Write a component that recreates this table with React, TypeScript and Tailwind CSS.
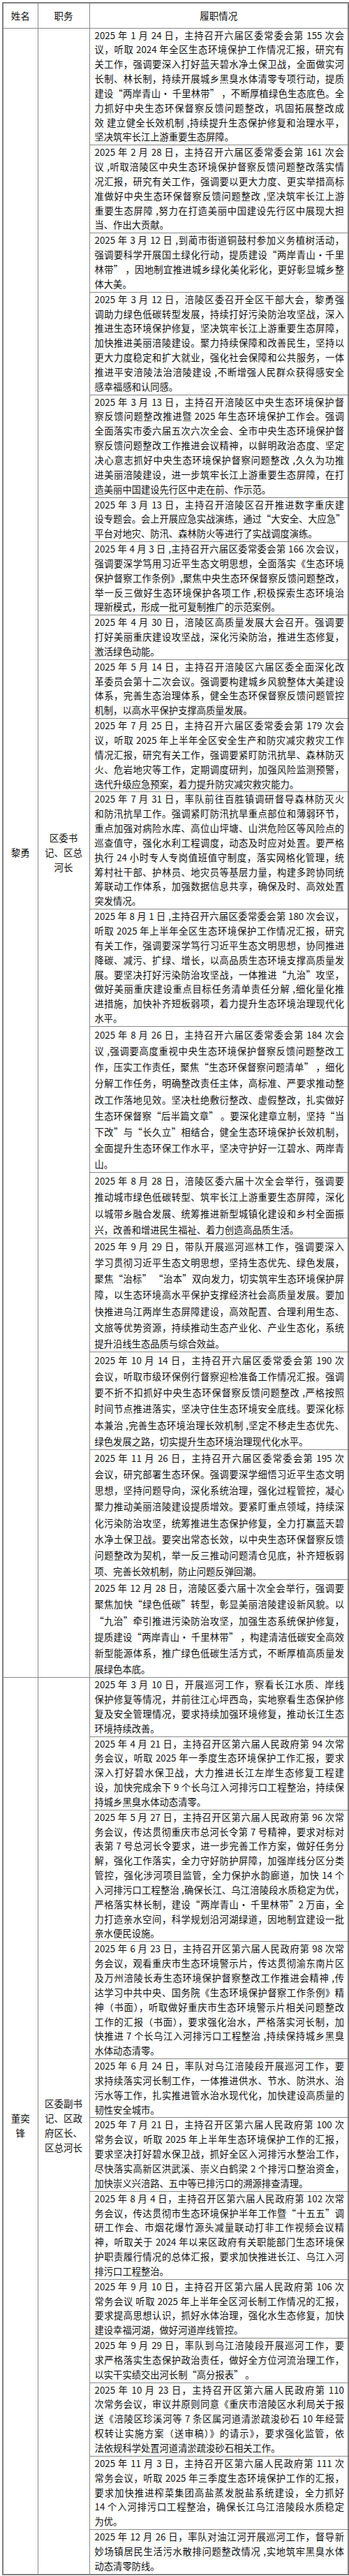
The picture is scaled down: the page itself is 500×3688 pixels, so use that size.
type Entry = { lines: string[]; tall?: boolean };

const LEAD: Entry[] = [
  {
    lines: [
      "2025 年 1 月 24 日，主持召开六届区委常委会第 155 次会",
      "议，听取 2024 年全区生态环境保护工作情况汇报，研究有",
      "关工作，强调要深入打好蓝天碧水净土保卫战，全面做实河",
      "长制、林长制，持续开展城乡黑臭水体清零专项行动，提质",
      "建设“两岸青山· 千里林带” ，不断厚植绿色生态底色。全",
      "力抓好中央生态环保督察反馈问题整改，巩固拓展整改成",
      "效 建立健全长效机制 ,持续提升生态保护修复和治理水平，",
      "坚决筑牢长江上游重要生态屏障。",
    ],
  },
  {
    lines: [
      "2025 年 2 月 28 日，主持召开六届区委常委会第 161 次会",
      "议 ,听取涪陵区中央生态环境保护督察反馈问题整改落实情",
      "况汇报，研究有关工作，强调要以更大力度、更实举措高标",
      "准做好中央生态环保督察反馈问题整改 ,坚决筑牢长江上游",
      "重要生态屏障 ,努力在打造美丽中国建设先行区中展现大担",
      "当、作出大贡献。",
    ],
  },
  {
    lines: [
      "2025 年 3 月 12 日 ,到蔺市街道铜鼓村参加义务植树活动，",
      "强调要科学开展国土绿化行动，提质建设“两岸青山•千里",
      "林带” ，因地制宜推进城乡绿化美化彩化，更好彰显城乡整",
      "体大美。",
    ],
  },
  {
    lines: [
      "2025 年 3 月 12 日，涪陵区委召开全区干部大会，黎勇强",
      "调助力绿色低碳转型发展，持续打好污染防治攻坚战，深入",
      "推进生态环境保护修复，坚决筑牢长江上游重要生态屏障，",
      "加快推进美丽涪陵建设。聚力持续保障和改善民生，坚持以",
      "更大力度稳定和扩大就业，强化社会保障和公共服务，一体",
      "推进平安涪陵法治涪陵建设 ,不断增强人民群众获得感安全",
      "感幸福感和认同感。",
    ],
  },
  {
    lines: [
      "2025 年 3 月 13 日，主持召开涪陵区中央生态环境保护督",
      "察反馈问题整改推进暨 2025 年生态环境保护工作会。强调",
      "全面落实市委六届五次六次全会、全市中央生态环境保护督",
      "察反馈问题整改工作推进会议精神，以鲜明政治态度、坚定",
      "决心意志抓好中央生态环境保护督察问题整改 ,久久为功推",
      "进美丽涪陵建设，进一步筑牢长江上游重要生态屏障，在打",
      "造美丽中国建设先行区中走在前、作示范。",
    ],
  },
  {
    lines: [
      "2025 年 3 月 13 日，主持召开涪陵区召开推进数字重庆建",
      "设专题会。会上开展应急实战演练，通过“大安全、大应急”",
      "平台对地灾、防汛、森林防火等进行了实战调度演练。",
    ],
  },
  {
    lines: [
      "2025 年 4 月 3 日 ,主持召开六届区委常委会第 166 次会议，",
      "强调要深学笃用习近平生态文明思想，全面落实《生态环境",
      "保护督察工作条例》,聚焦中央生态环保督察反馈问题整改，",
      "举一反三做好生态环境保护各项工作 ,积极探索生态环境治",
      "理新模式，形成一批可复制推广的示范案例。",
    ],
  },
  {
    lines: [
      "2025 年 4 月 30 日，涪陵区高质量发展大会召开。强调要",
      "打好美丽重庆建设攻坚战，深化污染防治，推进生态修复，",
      "激活绿色动能。",
    ],
  },
  {
    lines: [
      "2025 年 5 月 14 日，主持召开涪陵区六届区委全面深化改",
      "革委员会第十二次会议。强调要构建城乡风貌整体大美建设",
      "体系，完善生态治理体系，健全生态环保督察反馈问题管控",
      "机制，以高水平保护支撑高质量发展。",
    ],
  },
  {
    lines: [
      "2025 年 7 月 25 日，主持召开六届区委常委会第 179 次会",
      "议，听取 2025 年上半年全区安全生产和防灾减灾救灾工作",
      "情况汇报，研究有关工作，强调要紧盯防汛抗旱、森林防灭",
      "火、危岩地灾等工作，定期调度研判，加强风险监测预警，",
      "迭代升级应急预案，着力提升防灾减灾救灾能力。",
    ],
  },
  {
    lines: [
      "2025 年 7 月 31 日，率队前往百胜镇调研督导森林防灭火",
      "和防汛抗旱工作。强调紧盯防汛抗旱重点部位和薄弱环节，",
      "重点加强对病险水库、高位山坪塘、山洪危险区等风险点的",
      "巡查值守，强化水利工程调度，动态及时应对处置。要严格",
      "执行 24 小时专人专岗值班值守制度，落实网格化管理，统",
      "筹村社干部、护林员、地灾员等基层力量，构建多跨协同统",
      "筹联动工作体系，加强数据信息共享，确保及时、高效处置",
      "突发情况。",
    ],
  },
  {
    lines: [
      "2025 年 8 月 1 日 ,主持召开六届区委常委会第 180 次会议，",
      "听取 2025 年上半年全区生态环境保护工作情况汇报，研究",
      "有关工作，强调要深学笃行习近平生态文明思想，协同推进",
      "降碳、减污、扩绿、增长，以高品质生态环境支撑高质量发",
      "展。要坚决打好污染防治攻坚战，一体推进“九治”攻坚，",
      "做好美丽重庆建设重点目标任务清单责任分解 ,细化量化推",
      "进措施，加快补齐短板弱项，着力提升生态环境治理现代化",
      "水平。",
    ],
  },
  {
    tall: true,
    lines: [
      "2025 年 8 月 26 日，主持召开六届区委常委会第 184 次会",
      "议 ,强调要高度重视中央生态环境保护督察反馈问题整改工",
      "作，压实工作责任，聚焦“生态环保督察问题清单” ，细化",
      "分解工作任务，明确整改责任主体，高标准、严要求推动整",
      "改工作落地见效。坚决杜绝敷衍整改、虚假整改，扎实做好",
      "生态环保督察“后半篇文章” 。要深化建章立制，坚持“当",
      "下改”与“长久立”相结合，健全生态环境保护长效机制，",
      "全面提升生态环保工作水平，坚决守护好一江碧水、两岸青",
      "山。",
    ],
  },
  {
    tall: true,
    lines: [
      "2025 年 8 月 28 日，涪陵区委六届十次全会举行，强调要",
      "推动城市绿色低碳转型、筑牢长江上游重要生态屏障，深化",
      "以城带乡融合发展、统筹推进新型城镇化建设和乡村全面振",
      "兴，改善和增进民生福祉、着力创造高品质生活。",
    ],
  },
  {
    tall: true,
    lines: [
      "2025 年 9 月 29 日，带队开展巡河巡林工作，强调要深入",
      "学习贯彻习近平生态文明思想，坚持生态优先、绿色发展，",
      "聚焦“治标” “治本”双向发力，切实筑牢生态环境保护屏",
      "障，以生态环境高水平保护支撑经济社会高质量发展。要加",
      "快推进乌江两岸生态屏障建设，高效配置、合理利用生态、",
      "文旅等优势资源，持续推动生态产业化、产业生态化，系统",
      "提升沿线生态品质与综合效益。",
    ],
  },
  {
    tall: true,
    lines: [
      "2025 年 10 月 14 日，主持召开六届区委常委会第 190 次",
      "会议，听取市级环保例行督察迎检准备工作情况汇报。强调",
      "要不折不扣抓好中央生态环保督察反馈问题整改 ,严格按照",
      "时间节点推进落实，坚决守住生态环境安全底线。要深化标",
      "本兼治 ,完善生态环境治理长效机制 ,坚定不移走生态优先、",
      "绿色发展之路，切实提升生态环境治理现代化水平。",
    ],
  },
  {
    tall: true,
    lines: [
      "2025 年 11 月 26 日，主持召开六届区委常委会第 195 次",
      "会议，研究部署生态环保。强调要深学细悟习近平生态文明",
      "思想，坚持问题导向，深化系统治理，强化过程管控，凝心",
      "聚力推动美丽涪陵建设提质增效。要紧盯重点领域，持续深",
      "化污染防治攻坚，统筹推进生态保护修复，全力打赢蓝天碧",
      "水净土保卫战。要突出常态长效，以中央生态环保督察反馈",
      "问题整改为契机，举一反三推动问题清仓见底，补齐短板弱",
      "项、完善长效机制，防止问题反弹回潮。",
    ],
  },
  {
    tall: true,
    lines: [
      "2025 年 12 月 28 日，涪陵区委六届十次全会举行，强调要",
      "聚焦加快“绿色低碳”转型，彰显美丽涪陵建设新风貌。以",
      "“九治”牵引推进污染防治攻坚，加强生态系统保护修复，",
      "提质建设“两岸青山· 千里林带” ，构建清洁低碳安全高效",
      "新型能源体系，推广绿色低碳生活方式，不断厚植高质量发",
      "展绿色本底。",
    ],
  },
];

const MAYOR: Entry[] = [
  {
    lines: [
      "2025 年 3 月 10 日，开展巡河工作，察看长江水质、岸线",
      "保护修复等情况，并前往江心坪西岛，实地察看生态保护修",
      "复及安全管理情况，要求持续加强环境修复，推动长江生态",
      "环境持续改善。",
    ],
  },
  {
    lines: [
      "2025 年 4 月 21 日，主持召开区第六届人民政府第 94 次常",
      "务会议，听取 2025 年一季度生态环境保护工作汇报，要求",
      "深入打好碧水保卫战，大力推进长江左岸生态修复工程建",
      "设，加快完成余下 9 个长乌江入河排污口工程整治，持续保",
      "持城乡黑臭水体动态清零。",
    ],
  },
  {
    lines: [
      "2025 年 5 月 27 日，主持召开区第六届人民政府第 96 次常",
      "务会议，传达贯彻重庆市总河长令第 7 号精神，要求对标对",
      "表第 7 号总河长令要求，进一步完善工作方案，做好任务分",
      "解，强化工作落实，全力守好防护屏障，加强岸线分区分类",
      "管控，强化涉河项目监管，全力保护水韵廊道，加快 14 个",
      "入河排污口工程整治 ,确保长江、乌江涪陵段水质稳定为优，",
      "严格落实林长制，建设“两岸青山· 千里林带”2 万亩，全",
      "力打造亲水空间，科学规划沿河湖绿道，因地制宜建设一批",
      "亲水便民设施。",
    ],
  },
  {
    lines: [
      "2025 年 6 月 23 日，主持召开区第六届人民政府第 98 次常",
      "务会议，观看重庆市生态环境警示片，传达贯彻渝东南片区",
      "及万州涪陵长寿生态环境保护督察整改工作推进会精神 ,传",
      "达学习中共中央、国务院《生态环境保护督察工作条例》精",
      "神（书面），听取做好重庆市生态环境警示片相关问题整改",
      "工作的汇报（书面），要求强化治水，严格落实河长制，加",
      "快推进 7 个长乌江入河排污口工程整治 ,持续保持城乡黑臭",
      "水体动态清零。",
    ],
  },
  {
    lines: [
      "2025 年 6 月 24 日，率队对乌江涪陵段开展巡河工作，要",
      "求持续落实河长制工作，一体推进供水、节水、防洪水、治",
      "污水等工作，扎实推进管水治水现代化，加快建设高质量的",
      "韧性安全城市。",
    ],
  },
  {
    lines: [
      "2025 年 7 月 21 日，主持召开区第六届人民政府第 100 次",
      "常务会议，听取 2025 年上半年生态环境保护工作的汇报，",
      "要求坚决打好碧水保卫战，抓好全区入河排污水整治工作，",
      "尽快落实高新区洪武溪、崇义白鹤梁 2 个排污口整治资金，",
      "加快崇义兴涪路、五中等已排污口的溯源排查清理。",
    ],
  },
  {
    lines: [
      "2025 年 8 月 4 日，主持召开区第六届人民政府第 102 次常",
      "务会议，传达贯彻市生态环境保护半年工作暨“十五五”调",
      "研工作会、市烟花爆竹源头减量联动打非工作视频会议精",
      "神，听取关于 2024 年以来区政府有关职能部门生态环境保",
      "护职责履行情况的总体汇报，要求加快推进长江、乌江入河",
      "排污口工程整治。",
    ],
  },
  {
    lines: [
      "2025 年 9 月 10 日，主持召开区第六届人民政府第 106 次",
      "常务会议 听取 2025 年上半年全区河长制工作情况的汇报，",
      "要求提高思想认识，抓好水体治理，强化水生态修复，加快",
      "建设幸福河湖，做好河道岸线管控。",
    ],
  },
  {
    lines: [
      "2025 年 9 月 29 日，率队到乌江涪陵段开展巡河工作，要",
      "求严格落实生态保护政治责任，做好全方位河流治理工作，",
      "以实干实绩交出河长制“高分报表” 。",
    ],
  },
  {
    lines: [
      "2025 年 10 月 23 日，主持召开区第六届人民政府第 110",
      "次常务会议，审议并原则同意《重庆市涪陵区水利局关于报",
      "送《涪陵区珍溪河等 7 条区属河道清淤疏浚砂石 10 年经营",
      "权转让实施方案（送审稿）》的请示》，要求强化监管，依",
      "法依规科学处置河道清淤疏浚砂石相关工作。",
    ],
  },
  {
    lines: [
      "2025 年 11 月 3 日，主持召开区第六届人民政府第 111 次",
      "常务会议，听取 2025 年三季度生态环境保护工作的汇报，",
      "要求加快推进榨菜集团高盐蒸发脱盐系统建设，全力抓好",
      "14 个入河排污口工程整治，确保长江乌江涪陵段水质稳定",
      "为优。",
    ],
  },
  {
    lines: [
      "2025 年 12 月 26 日，率队对油江河开展巡河工作，督导新",
      "妙场镇居民生活污水散排问题整改情况 ,实地筑牢黑臭水体",
      "动态清零防线。",
    ],
  },
];

function DutyCell({ entry }: { entry: Entry }) {
  return (
    <td
      className={`border border-[#8a8a8a] pl-[7px] pr-[5px] py-0 align-top text-[13.3px] ${
        entry.tall ? "leading-[23.15px]" : "leading-[20.85px]"
      }`}
    >
      {entry.lines.map((line, i) =>
        i < entry.lines.length - 1 ? (
          <span key={i} className="block text-justify [text-align-last:justify]">
            {line}
          </span>
        ) : (
          <span key={i} className="block text-left">
            {line}
          </span>
        )
      )}
    </td>
  );
}

function Group({ name, role, entries }: { name: string[]; role: string[]; entries: Entry[] }) {
  return (
    <>
      {entries.map((entry, i) => (
        <tr key={i}>
          {i === 0 && (
            <>
              <td
                rowSpan={entries.length}
                className="border border-[#8a8a8a] p-0 text-center align-middle text-[13.5px] leading-[21px]"
              >
                {name.map((n) => (
                  <span key={n} className="block">
                    {n}
                  </span>
                ))}
              </td>
              <td
                rowSpan={entries.length}
                className="border border-[#8a8a8a] p-0 text-center align-middle text-[13.5px] leading-[21px]"
              >
                {role.map((r) => (
                  <span key={r} className="block">
                    {r}
                  </span>
                ))}
              </td>
            </>
          )}
          <DutyCell entry={entry} />
        </tr>
      ))}
    </>
  );
}

export default function App() {
  return (
    <div className="min-h-screen bg-white pt-[3px] pl-[3px] font-['Noto_Sans_CJK_SC','Microsoft_YaHei',sans-serif] text-[#111]">
      <table className="w-[495px] table-fixed border-collapse border-2 border-[#808080]">
        <colgroup>
          <col className="w-[50px]" />
          <col className="w-[74px]" />
          <col className="w-[371px]" />
        </colgroup>
        <thead>
          <tr className="h-[36px] text-[13.5px]">
            <th className="border border-[#8a8a8a] font-normal">姓名</th>
            <th className="border border-[#8a8a8a] font-normal">职务</th>
            <th className="border border-[#8a8a8a] font-normal">履职情况</th>
          </tr>
        </thead>
        <tbody>
          <Group name={["黎勇"]} role={["区委书", "记、区总", "河长"]} entries={LEAD} />
          <Group
            name={["董奕", "锋"]}
            role={["区委副书", "记、区政", "府区长、", "区总河长"]}
            entries={MAYOR}
          />
        </tbody>
      </table>
    </div>
  );
}
